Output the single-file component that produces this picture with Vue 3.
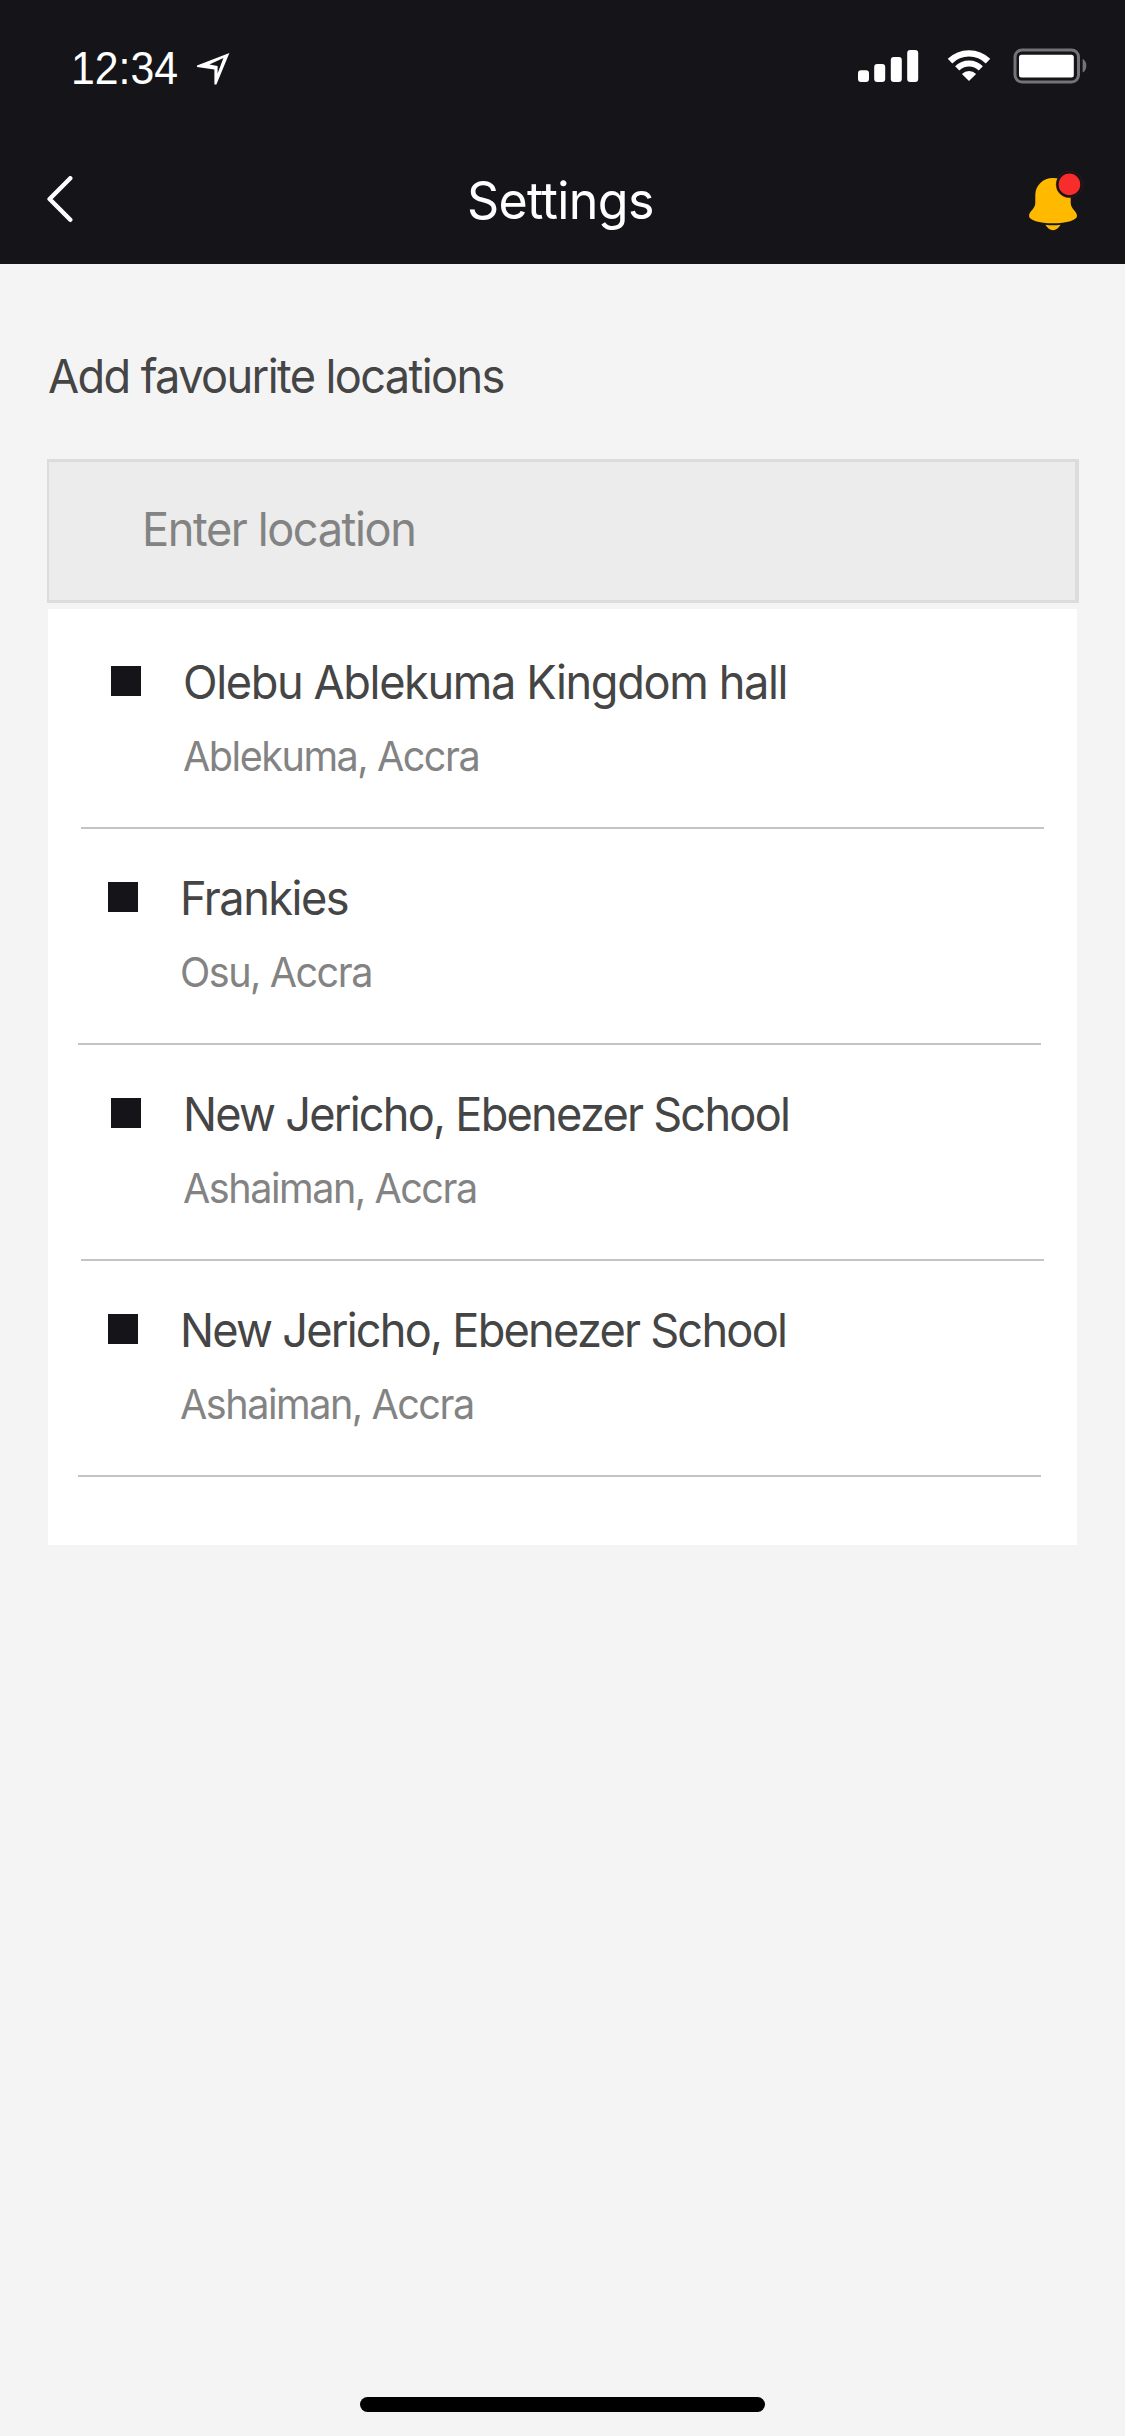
<script setup>
const locations = [
  { name: 'Olebu Ablekuma Kingdom hall', area: 'Ablekuma, Accra', ls: '-1.43px' },
  { name: 'Frankies', area: 'Osu, Accra', ls: '-1.57px' },
  { name: 'New Jericho, Ebenezer School', area: 'Ashaiman, Accra', ls: '-1.83px' },
  { name: 'New Jericho, Ebenezer School', area: 'Ashaiman, Accra', ls: '-1.83px' }
]
</script>

<template>
  <div class="screen">
    <header class="header">
      <div class="status">
        <span class="time">12:34</span>
        <svg class="arrow" width="34" height="34" viewBox="0 0 34 34">
          <path fill="#fff" fill-rule="evenodd" d="M33.4 1 L20.4 32.6 L18.4 32.6 V17.4 L1 15 V13.4 Z M27.4 6 L13.4 12.6 L21.6 14 V21.6 Z" />
        </svg>
        <svg class="signal" width="60" height="32" viewBox="0 0 60 32" fill="#fff">
          <rect x="0" y="20.3" width="11" height="11.7" rx="3" />
          <rect x="16.2" y="14" width="11" height="18" rx="3" />
          <rect x="32.8" y="7" width="11" height="25" rx="3" />
          <rect x="49.2" y="0" width="11" height="32" rx="3" />
        </svg>
        <svg class="wifi" width="44" height="32" viewBox="0 0 44 32">
          <g fill="none" stroke="#fff">
            <path d="M3 11.1 A27.2 27.2 0 0 1 41 11.1" stroke-width="6.4" />
            <path d="M10.2 18.3 A17 17 0 0 1 33.8 18.3" stroke-width="6" />
          </g>
          <path fill="#fff" d="M22 31 L14.9 24 A10.2 10.2 0 0 1 29.1 24 Z" />
        </svg>
        <svg class="battery" width="74" height="36" viewBox="0 0 74 36">
          <rect x="2" y="2" width="63.5" height="32" rx="7" fill="none" stroke="#747377" stroke-width="3" />
          <rect x="6" y="6.8" width="54.8" height="22.8" rx="2.5" fill="#fff" />
          <path d="M69.6 11 C74.6 13 74.6 22.4 69.6 24.4 Z" fill="#747377" />
        </svg>
      </div>
      <div class="nav">
        <svg class="back" width="30" height="50" viewBox="0 0 30 50">
          <path d="M23.3 2.2 L2.6 23 L23.3 43.8" fill="none" stroke="#fff" stroke-width="4.4" stroke-linecap="round" stroke-linejoin="round" />
        </svg>
        <h1 class="title">Settings</h1>
        <svg class="bell" width="56" height="64" viewBox="0 0 56 64">
          <path fill="#ffba00" d="M24 10 C14 10 6.3 17.5 6.3 27 V35 C6.3 41 0 43 0 48 C0 52 10 55.3 24 55.3 C38 55.3 48 52 48 48 C48 43 41.7 41 41.7 35 V27 C41.7 17.5 34 10 24 10 Z" />
          <path fill="#ffba00" d="M16.4 56.8 Q24 57.8 31.6 56.8 C29.5 60.4 27 62.2 24 62.2 C21 62.2 18.5 60.4 16.4 56.8 Z" />
          <circle cx="40.4" cy="16.4" r="13.3" fill="#151419" stroke="#6b1b21" stroke-width=".4" />
          <circle cx="40.4" cy="16.4" r="10.8" fill="#f92c2c" />
        </svg>
      </div>
    </header>

    <main class="content">
      <h2 class="heading">Add favourite locations</h2>
      <div class="field"><span class="placeholder">Enter location</span></div>
      <ul class="list">
        <li v-for="(item, i) in locations" :key="i" class="item">
          <span class="marker"></span>
          <div class="text">
            <span class="name" :style="{ letterSpacing: item.ls }">{{ item.name }}</span>
            <span class="area">{{ item.area }}</span>
          </div>
        </li>
      </ul>
    </main>

    <footer class="home"><span class="home-bar"></span></footer>
  </div>
</template>

<style>
body { background: #f4f4f4; }
</style>

<style scoped>
.screen {
  width: 1125px;
  height: 2436px;
  display: flex;
  flex-direction: column;
  background: #f4f4f4;
  font-family: Inter, "Liberation Sans", sans-serif;
  overflow: hidden;
}
.header { height: 264px; background: #151419; color: #fff; }
.status { height: 136px; display: flex; align-items: flex-start; box-sizing: border-box; padding-left: 71px; }
.time {
  width: 125px;
  font: 46px/136px "Liberation Sans", sans-serif;
  transform: scaleX(.93);
  transform-origin: 0 50%;
}
.arrow { margin-top: 52px; }
.signal { margin: 50px 0 0 628px; overflow: visible; }
.wifi { margin: 50px 0 0 29px; }
.battery { margin: 48px 0 0 22px; }
.nav {
  height: 128px;
  display: flex;
  align-items: center;
  box-sizing: border-box;
  padding: 0 40px 0 47px;
}
.back { margin-top: 2px; }
.title {
  width: 561px;
  margin: 2px 0 0 390px;
  font-size: 52px;
  font-weight: 400;
  line-height: 64px;
  letter-spacing: -.7px;
  transform: scaleX(.965);
  transform-origin: 0 50%;
}
.bell { display: block; flex: none; margin-left: 1px; }
.content { flex: 1; padding: 82px 46px 0 47px; }
.heading {
  margin: 0 0 53px 1px;
  font-size: 46.8px;
  font-weight: 400;
  line-height: 60px;
  letter-spacing: -1.68px;
  color: #454545;
  transform: scaleX(.965);
  transform-origin: 0 50%;
}
.field {
  height: 144px;
  box-sizing: border-box;
  border: 3px solid #dcdcdc;
  border-left-width: 2px;
  border-right-width: 4px;
  background: #ececec;
  padding: 37px 0 0 93px;
}
.placeholder {
  display: block;
  font-size: 46.8px;
  line-height: 60px;
  letter-spacing: -1.47px;
  color: #838383;
  transform: scaleX(.965);
  transform-origin: 0 50%;
}
.list {
  height: 936px;
  box-sizing: border-box;
  margin: 6px 2px 0 1px;
  padding: 4px 0 0 33px;
  list-style: none;
  background: #fff;
}
.item {
  display: flex;
  width: 963px;
  height: 216px;
  box-sizing: border-box;
  border-bottom: 2px solid #c4c4c4;
  padding: 39px 0 0 30px;
}
.item:nth-child(even) { margin-left: -3px; }
.marker { width: 30px; height: 30px; margin: 14px 41.5px 0 0; background: #151419; }
.text {
  display: flex;
  flex-direction: column;
  gap: 14px;
  white-space: nowrap;
  transform: scaleX(.965);
  transform-origin: 0 50%;
}
.name { font-size: 46.8px; line-height: 60px; color: #454545; }
.area { font-size: 41px; line-height: 60px; letter-spacing: -1.53px; color: #838383; }
.home { height: 39px; display: flex; justify-content: center; align-items: flex-start; }
.home-bar { width: 405px; height: 15px; border-radius: 8px; background: #000; }
</style>
